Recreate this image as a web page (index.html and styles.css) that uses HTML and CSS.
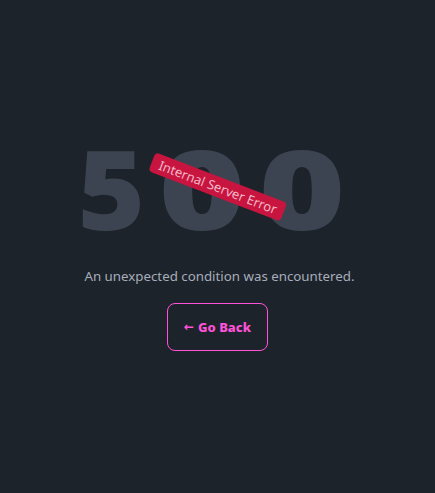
FILE: index.html
```html
<!DOCTYPE html>
<html lang="en">
<head>
<meta charset="utf-8">
<title>500 - Internal Server Error</title>
<link rel="stylesheet" href="styles.css">
</head>
<body>
<main class="page">
  <div class="code">
    <span class="digit digit-five">5</span><span class="digit digit-zero">0</span><span class="digit digit-zero">0</span>
    <span class="badge">Internal Server Error</span>
  </div>
  <p class="message">An unexpected condition was encountered.</p>
  <a class="btn" href="#"><span class="arrow">&larr;</span> Go Back</a>
</main>
</body>
</html>
```

FILE: styles.css
```css
html, body {
  margin: 0;
  padding: 0;
}
body {
  background: #1d232a;
  min-height: 100vh;
  font-family: "Noto Sans", "Open Sans", sans-serif;
}
.page {
  display: flex;
  flex-direction: column;
  align-items: center;
  padding-top: 132px;
}
.code {
  position: relative;
  display: flex;
  gap: 20px;
  padding-right: 10px;
  font-family: "Open Sans", sans-serif;
  font-weight: 800;
  font-size: 110px;
  line-height: 1;
  color: #3d4451;
}
.digit {
  display: block;
  text-align: center;
}
.digit-five {
  width: 59px;
  transform: translateX(-4px) scaleX(1.05);
}
.digit-zero {
  width: 80px;
  transform: scaleX(1.35);
}
.badge {
  position: absolute;
  left: 50%;
  top: 50%;
  transform: translate(-50%, -50%) rotate(21deg);
  background: #c8153f;
  color: #f2b8c8;
  font-family: "Noto Sans", sans-serif;
  font-weight: 400;
  font-size: 13px;
  line-height: 20px;
  padding: 0 8px;
  border-radius: 4px;
  white-space: nowrap;
}
.message {
  margin: 24px 0 0 4px;
  color: #a6adbb;
  font-size: 13.3px;
  line-height: 20px;
}
.btn {
  margin-top: 17px;
  display: inline-flex;
  align-items: center;
  justify-content: center;
  gap: 4px;
  height: 48px;
  padding: 0 16px;
  box-sizing: border-box;
  border: 1px solid #ff52d9;
  border-radius: 8px;
  color: #ff52d9;
  font-family: "Noto Sans", sans-serif;
  font-weight: 800;
  font-size: 13px;
  text-decoration: none;
}
.arrow {
  font-family: "DejaVu Sans", sans-serif;
  font-weight: 700;
  font-size: 12px;
}
```
